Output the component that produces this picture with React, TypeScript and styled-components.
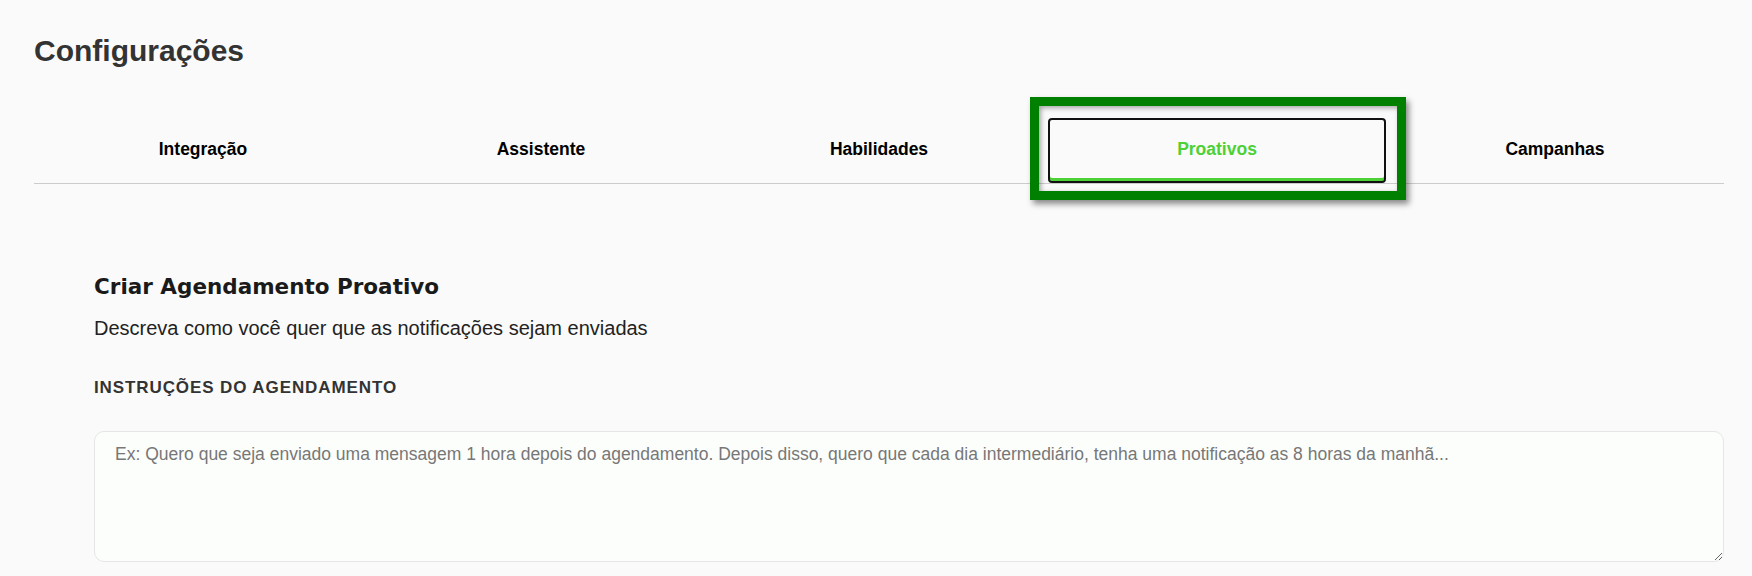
import * as React from "react";
import styled, { createGlobalStyle, css } from "styled-components";

const GlobalStyle = createGlobalStyle`
  html, body {
    margin: 0;
    padding: 0;
    background: #fafafa;
    font-family: "Liberation Sans", Arial, sans-serif;
  }
  * {
    box-sizing: border-box;
  }
`;

const Page = styled.div`
  padding: 33px 28px 0 34px;
`;

const Title = styled.h1`
  margin: 0;
  font-size: 30px;
  line-height: 36px;
  font-weight: 700;
  color: #333;
`;

const TabList = styled.div`
  display: flex;
  margin-top: 49px;
  border-bottom: 1px solid #cccccc;
`;

const Tab = styled.button<{ active?: boolean }>`
  position: relative;
  flex: 1;
  height: 65px;
  display: flex;
  align-items: center;
  justify-content: center;
  padding: 0;
  background: transparent;
  border: 2px solid transparent;
  border-bottom: 5px solid transparent;
  border-radius: 4px;
  font-family: "Liberation Sans", Arial, sans-serif;
  font-size: 17.5px;
  font-weight: 700;
  color: #000;
  cursor: pointer;

  ${props =>
    props.active &&
    css`
      color: #4cd137;
      border-color: #111;
      box-shadow: inset 0 -3px 0 #4cd137;
      border-bottom-width: 2px;
      padding-bottom: 3px;
    `}
`;

const Highlight = styled.span`
  position: absolute;
  left: -20px;
  top: -23px;
  width: 376px;
  height: 103px;
  border: 9px solid #008000;
  box-shadow: 3px 4px 6px rgba(0, 0, 0, 0.45), inset 2px 2px 5px rgba(0, 0, 0, 0.35);
  pointer-events: none;
`;

const Content = styled.section`
  padding: 90px 0 0 60px;
`;

const Heading = styled.h2`
  margin: 0;
  font-family: "DejaVu Sans", "Liberation Sans", sans-serif;
  font-size: 21.5px;
  line-height: 1.2;
  font-weight: 700;
  color: #1a1a1a;
`;

const Description = styled.p`
  margin: 16px 0 0;
  font-size: 20px;
  line-height: 24px;
  color: #222;
`;

const Label = styled.label`
  display: block;
  margin-top: 38px;
  font-size: 17px;
  line-height: 20.4px;
  font-weight: 700;
  letter-spacing: 0.9px;
  color: #333;
`;

const TextArea = styled.textarea`
  display: block;
  width: 100%;
  height: 131px;
  margin-top: 33px;
  padding: 11px 20px;
  background: #fcfefc;
  border: 1px solid #e6e6e6;
  border-radius: 10px;
  font-family: "Liberation Sans", Arial, sans-serif;
  font-size: 17.5px;
  line-height: 1.3;
  color: #222;
  outline: none;

  &::placeholder {
    color: #777;
  }
`;

const tabs = ["Integração", "Assistente", "Habilidades", "Proativos", "Campanhas"];

const App: React.FC = () => {
  const [active, setActive] = React.useState("Proativos");

  return (
    <>
      <GlobalStyle />
      <Page>
        <Title>Configurações</Title>
        <TabList>
          {tabs.map(tab => (
            <Tab key={tab} active={tab === active} onClick={() => setActive(tab)}>
              {tab}
              {tab === active && <Highlight />}
            </Tab>
          ))}
        </TabList>
        <Content>
          <Heading>Criar Agendamento Proativo</Heading>
          <Description>Descreva como você quer que as notificações sejam enviadas</Description>
          <Label htmlFor="instrucoes">INSTRUÇÕES DO AGENDAMENTO</Label>
          <TextArea
            id="instrucoes"
            placeholder="Ex: Quero que seja enviado uma mensagem 1 hora depois do agendamento. Depois disso, quero que cada dia intermediário, tenha uma notificação as 8 horas da manhã..."
          />
        </Content>
      </Page>
    </>
  );
};

export default App;
